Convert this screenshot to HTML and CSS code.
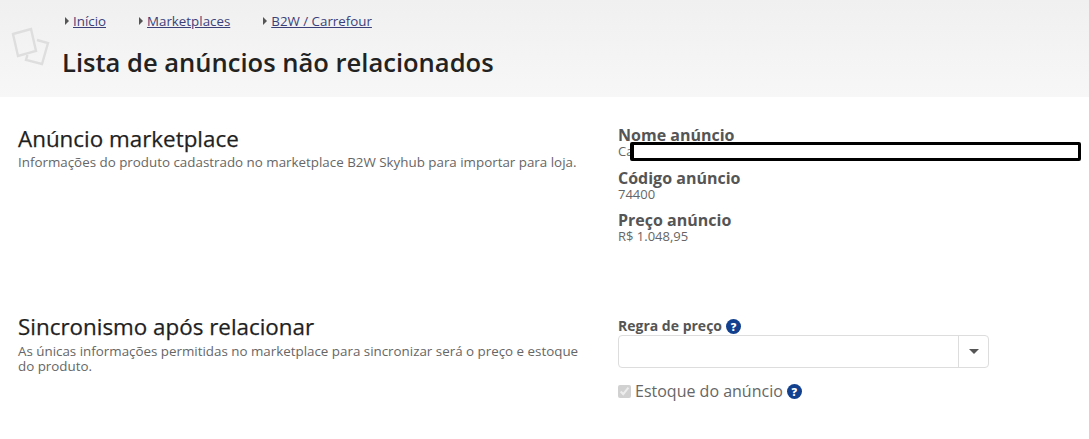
FILE: index.html
```html
<!DOCTYPE html>
<html lang="pt-BR">
<head>
<meta charset="utf-8">
<title>Lista de anúncios não relacionados</title>
<link rel="stylesheet" href="styles.css">
</head>
<body>
<header class="page-header">
  <svg class="logo" width="40" height="40" viewBox="0 0 40 40" fill="none" stroke="#dedede" stroke-width="2.4">
    <path d="M27 14l11 3-6 21-16-4 1.4-5"/>
    <path d="M3 8l18-5 5 22-18 5z"/>
  </svg>
  <div class="header-text">
    <nav class="crumbs">
      <span class="crumb crumb-a"><a href="#">Início</a></span>
      <span class="crumb crumb-b"><a href="#">Marketplaces</a></span>
      <span class="crumb"><a href="#">B2W / Carrefour</a></span>
    </nav>
    <h1 class="title">Lista de anúncios não relacionados</h1>
  </div>
</header>
<main>
  <section class="row row-first">
    <div class="intro">
      <h2>Anúncio marketplace</h2>
      <p>Informações do produto cadastrado no marketplace B2W Skyhub para importar para loja.</p>
    </div>
    <div class="fields">
      <div class="field redacted-field">
        <strong>Nome anúncio</strong>
        <span>Ca</span>
        <div class="redaction"></div>
      </div>
      <div class="field"><strong>Código anúncio</strong><span>74400</span></div>
      <div class="field"><strong>Preço anúncio</strong><span>R$ 1.048,95</span></div>
    </div>
  </section>
  <section class="row row-second">
    <div class="intro">
      <h2>Sincronismo após relacionar</h2>
      <p>As únicas informações permitidas no marketplace para sincronizar será o preço e estoque do produto.</p>
    </div>
    <div class="form">
      <label class="form-label">Regra de preço <span class="help">?</span></label>
      <div class="select"><span class="select-value"></span><span class="select-arrow"><i></i></span></div>
      <label class="check">
        <input type="checkbox" checked disabled>
        <span>Estoque do anúncio</span>
        <span class="help">?</span>
      </label>
    </div>
  </section>
</main>
</body>
</html>
```
FILE: styles.css
```css
* { box-sizing: border-box; }
html, body { margin: 0; padding: 0; }
body {
  background: #fff;
  font-family: "Open Sans", sans-serif;
  color: #555;
  height: 439px;
  overflow: hidden;
}
.page-header {
  height: 97px;
  background: linear-gradient(#f0f0f0, #f7f7f7);
  display: flex;
  padding: 26px 0 0 10px;
}
.logo { flex: none; width: 40px; height: 40px; }
.header-text { margin: -14px 0 0 12px; }
.crumbs { display: flex; font-size: 13.33px; line-height: 18px; padding-left: 3px; }
.crumb { display: flex; align-items: center; }
.crumb::before {
  content: "";
  width: 0; height: 0;
  border-left: 4px solid #555;
  border-top: 4px solid transparent;
  border-bottom: 4px solid transparent;
  margin-right: 4px;
}
.crumb-a { margin-right: 33px; }
.crumb-b { margin-right: 33px; }
.crumb a { color: #3b3f7a; text-decoration: underline; }
.title {
  margin: 15px 0 0;
  font-size: 25.55px;
  line-height: 34px;
  font-weight: 600;
  color: #222;
}
.row {
  display: grid;
  grid-template-columns: 600px 1fr;
  padding-left: 18px;
}
.row-first { padding-top: 27px; height: 215px; }
.intro { width: 570px; }
.intro h2 {
  margin: 0;
  font-size: 22.4px;
  line-height: 29px;
  font-weight: 400;
  color: #1f1f1f;
  -webkit-text-stroke: 0.25px #1f1f1f;
}
.intro p {
  margin: 2px 0 0;
  font-size: 13.36px;
  line-height: 15px;
  color: #666;
}
.row-second .intro p { margin-top: 3px; }
.fields { padding-top: 2px; }
.field { display: flex; flex-direction: column; margin-bottom: 10px; }
.field strong { font-size: 16px; line-height: 18px; font-weight: 700; color: #555; }
.field span { font-size: 13px; line-height: 14px; color: #666; }
.field + .field { padding-top: 1px; margin-bottom: 9px; }
.redacted-field { position: relative; }
.redaction {
  position: absolute;
  left: 12px;
  top: 16px;
  width: 451px;
  height: 19px;
  background: #fff;
  border: 3px solid #000;
  border-left-width: 4px;
  border-radius: 2px;
}
.form { padding-top: 6px; }
.form-label { display: flex; align-items: center; gap: 4px; font-size: 14px; line-height: 16px; font-weight: 700; color: #555; }
.help {
  display: inline-flex;
  align-items: center;
  justify-content: center;
  width: 15px;
  height: 15px;
  border-radius: 50%;
  background: #12408f;
  color: #fff;
  font-size: 11px;
  font-weight: 800;
  line-height: 1;
}
.select {
  display: flex;
  width: 371px;
  height: 33px;
  margin-top: 1px;
  border: 1px solid #ddd;
  border-radius: 4px;
  background: #fff;
}
.select-value { flex: 1; }
.select-arrow {
  width: 30px;
  border-left: 1px solid #ddd;
  display: flex;
  align-items: center;
  justify-content: center;
}
.select-arrow i {
  width: 0; height: 0;
  border-top: 5px solid #555;
  border-left: 5px solid transparent;
  border-right: 5px solid transparent;
}
.check { display: flex; align-items: center; margin-top: 12px; font-size: 16px; line-height: 22px; color: #666; }
.check input { margin: 0 4px 0 0; width: 13px; height: 13px; }
.check .help { margin-left: 4px; }
```
